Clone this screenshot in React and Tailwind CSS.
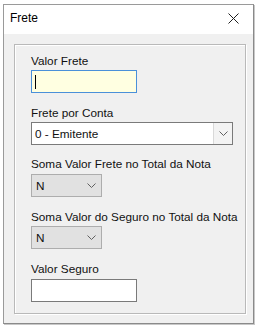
import React from "react";

const font = { fontFamily: '"Liberation Sans", Arial, sans-serif' };

function Chevron() {
  return (
    <svg width="9" height="5" viewBox="0 0 9 5" className="block">
      <path d="M0.5 0.5 L4.5 4.5 L8.5 0.5" fill="none" stroke="#606060" strokeWidth="1" />
    </svg>
  );
}

function Label({ children, className = "" }) {
  return <div className={"h-[13px] leading-[13px] text-[11.75px] text-[#111] whitespace-nowrap " + className}>{children}</div>;
}

export default function App() {
  return (
    <div className="w-[260px] h-[331px] bg-white pt-[4px] pl-[3px]" style={font}>
      <div className="w-[251px] h-[320px] border border-[#9a9a9a] border-r-[#8a8a8a] border-b-[#8a8a8a] shadow-[1px_1px_0_#c8c8c8] flex flex-col">
        <div className="h-[29px] bg-white flex items-center justify-between pl-[6px] pr-[14px] shrink-0">
          <span className="text-[12px] text-black leading-[14px] mt-[-3px]">Frete</span>
          <svg width="11" height="11" viewBox="0 0 11 11" className="mt-[-3px]">
            <path d="M0.5 0.5 L10.5 10.5 M10.5 0.5 L0.5 10.5" stroke="#202020" strokeWidth="1" />
          </svg>
        </div>
        <div className="flex-1 bg-[#f0f0f0] pt-[10px] pl-[10px] pr-[7px] pb-[9px] flex">
          <div className="flex-1 border border-[#b9b9b9] shadow-[inset_1px_1px_0_#ffffff,1px_1px_0_#ffffff] pl-[16px] pt-[9px]">
            <Label>Valor Frete</Label>
            <div className="mt-[3px] w-[106px] h-[23px] border border-[#4a90d9] bg-[#ffffe1] flex items-center pl-[3px]">
              <div className="w-[1px] h-[14px] bg-black" />
            </div>

            <Label className="mt-[13px]">Frete por Conta</Label>
            <div className="mt-[3px] w-[202px] h-[23px] border border-[#7a7a7a] bg-white flex items-center">
              <span className="flex-1 pl-[3px] text-[11.75px] leading-[13px] text-[#111]">0 - Emitente</span>
              <div className="w-[19px] h-full border-l border-[#d9d9d9] bg-[#f3f3f3] flex items-center justify-center">
                <Chevron />
              </div>
            </div>

            <Label className="mt-[12px]">Soma Valor Frete no Total da Nota</Label>
            <div className="mt-[4px] w-[71px] h-[23px] border border-[#adadad] bg-[#e1e1e1] flex items-center justify-between pl-[4px] pr-[5px]">
              <span className="text-[11.75px] leading-[13px] text-[#111]">N</span>
              <Chevron />
            </div>

            <Label className="mt-[13px]">Soma Valor do Seguro no Total da Nota</Label>
            <div className="mt-[3px] w-[71px] h-[23px] border border-[#adadad] bg-[#e1e1e1] flex items-center justify-between pl-[4px] pr-[5px]">
              <span className="text-[11.75px] leading-[13px] text-[#111]">N</span>
              <Chevron />
            </div>

            <Label className="mt-[13px]">Valor Seguro</Label>
            <div className="mt-[4px] w-[106px] h-[23px] border border-[#7a7a7a] bg-white" />
          </div>
        </div>
      </div>
    </div>
  );
}
